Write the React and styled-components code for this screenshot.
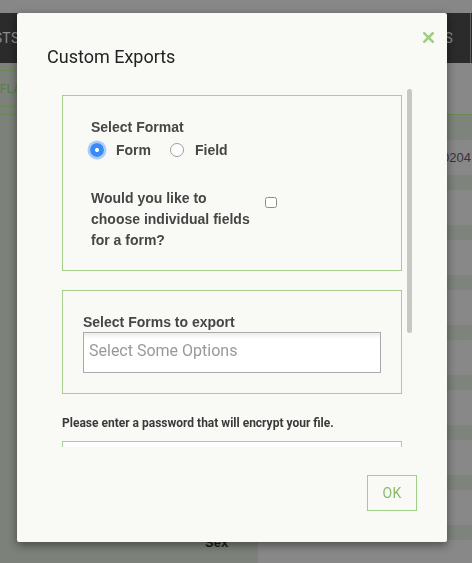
import React from "react";
import styled, { createGlobalStyle } from "styled-components";

const Global = createGlobalStyle`
  html, body { margin: 0; padding: 0; }
  body { font-family: Roboto, "Liberation Sans", Arial, sans-serif; overflow: hidden; }
`;

/* ---------- background page (dimmed) ---------- */
const Page = styled.div`
  width: 472px;
  height: 563px;
  display: flex;
  flex-direction: column;
  overflow: hidden;
  background: #878787;
`;
const TopStrip = styled.div`
  height: 13px;
  flex: none;
  background: #878787;
`;
const NavBar = styled.div`
  height: 50px;
  flex: none;
  background: #2b2b2b;
  display: flex;
  align-items: center;
  justify-content: space-between;
`;
const NavItem = styled.span`
  font-family: Roboto, sans-serif;
  font-size: 14px;
  color: #8c8c8c;
  letter-spacing: 0.3px;
  margin-left: ${(p) => p.$offset || 0}px;
`;
const NavRight = styled.div`
  display: flex;
  align-items: center;
  height: 100%;
`;
const NavDivider = styled.div`
  width: 1px;
  height: 100%;
  background: #5c5c5c;
  margin: 0 1px 0 17px;
`;
const Body = styled.div`
  flex: 1;
  display: flex;
  min-height: 0;
`;
const Sidebar = styled.div`
  width: 258px;
  flex: none;
  background: #7c8179;
  display: flex;
  flex-direction: column;
`;
const SideHeader = styled.div`
  height: 52px;
  box-sizing: border-box;
  border-bottom: 1px solid #6a8a55;
  padding-top: 7px;
`;
const FlagButton = styled.div`
  height: 37px;
  box-sizing: border-box;
  border-top: 1px solid #6a8a55;
  border-bottom: 1px solid #6a8a55;
  display: flex;
  align-items: center;
  font-family: Roboto, sans-serif;
  font-size: 12px;
  color: #5d7d48;
  width: 120px;
`;
const SideList = styled.div`
  flex: 1;
  display: flex;
  flex-direction: column;
  justify-content: flex-end;
  padding: 0 0 13px 205px;
`;
const SideLabel = styled.span`
  font-family: "Liberation Sans", Arial, sans-serif;
  font-weight: 700;
  font-size: 13px;
  color: #1c1c1c;
`;
const Main = styled.div`
  flex: 1;
  background: #888888;
  display: flex;
  flex-direction: column;
`;
const MainHeader = styled.div`
  height: 52px;
  flex: none;
  box-sizing: border-box;
  border-bottom: 1px solid #6a8a55;
`;
const HeadRow = styled.div`
  height: 25px;
  flex: none;
  background: #7e837c;
`;
const Row = styled.div`
  height: 50px;
  flex: none;
  box-sizing: border-box;
  border-bottom: 15px solid #7e837c;
  display: flex;
  align-items: center;
  justify-content: flex-end;
  padding-right: 1px;
  font-family: "Liberation Sans", Arial, sans-serif;
  font-size: 13px;
  color: #353535;
`;

/* ---------- modal ---------- */
const Modal = styled.div`
  position: fixed;
  left: 17px;
  top: 13px;
  width: 430px;
  height: 529px;
  box-sizing: border-box;
  background: #f9faf6;
  border-radius: 2px;
  box-shadow: 0 3px 10px rgba(0, 0, 0, 0.45);
  display: flex;
  flex-direction: column;
`;
const Header = styled.div`
  padding: 33px 30px 0;
`;
const Title = styled.h4`
  margin: 0;
  font-family: Roboto, sans-serif;
  font-weight: 400;
  font-size: 18px;
  line-height: 21px;
  color: #222;
`;
const CloseButton = styled.button`
  position: absolute;
  top: 19px;
  right: 13px;
  width: 11px;
  height: 11px;
  padding: 0;
  border: 0;
  background: none;
  display: flex;
  cursor: pointer;
`;
const ScrollWrap = styled.div`
  position: relative;
  margin: 22px 0 0 45px;
  width: 350px;
  height: 358px;
  flex: none;
`;
const ScrollArea = styled.div`
  width: 340px;
  height: 100%;
  overflow-y: auto;
  scrollbar-width: none;
  &::-webkit-scrollbar { display: none; }
`;
const ScrollThumb = styled.div`
  position: absolute;
  left: 345px;
  top: 0;
  width: 4.5px;
  height: 244px;
  border-radius: 3px;
  background: #c7c8c3;
`;
const Content = styled.div`
  padding-bottom: 133px;
`;
const FieldBox = styled.div`
  margin-top: ${(p) => p.$mt}px;
  border: 1px solid #a6d08c;
  padding: ${(p) => p.$pad};
`;
const Label = styled.div`
  font-family: "Liberation Sans", Arial, sans-serif;
  font-weight: 700;
  font-size: 14px;
  line-height: 18px;
  color: #464646;
`;
const RadioRow = styled.div`
  margin-top: 4px;
  height: 20px;
  display: flex;
  align-items: center;
  margin-left: -1px;
`;
const RadioOption = styled.label`
  display: flex;
  align-items: center;
  margin-right: ${(p) => p.$mr || 0}px;
`;
const Radio = styled.input.attrs({ type: "radio" })`
  appearance: none;
  margin: 0 ${(p) => p.$gap}px 0 0;
  width: 14px;
  height: 14px;
  border-radius: 50%;
  box-sizing: border-box;
  border: 1px solid #9f9f9f;
  background: #fff;
  &:checked {
    border: none;
    background: radial-gradient(circle, #fff 0 1.7px, #3a8bf6 2.3px);
    box-shadow: 0 0 0 2.5px rgba(110, 168, 250, 0.55);
  }
`;
const OptionText = styled.span`
  font-family: "Liberation Sans", Arial, sans-serif;
  font-weight: 700;
  font-size: 14px;
  color: #464646;
`;
const QuestionRow = styled.div`
  margin-top: 28px;
  display: flex;
  align-items: flex-start;
`;
const Question = styled.div`
  width: 166px;
  font-family: "Liberation Sans", Arial, sans-serif;
  font-weight: 700;
  font-size: 14px;
  line-height: 21px;
  color: #464646;
`;
const Checkbox = styled.input.attrs({ type: "checkbox" })`
  appearance: none;
  margin: 9px 0 0 8px;
  width: 12px;
  height: 11px;
  box-sizing: border-box;
  border: 1px solid #8c8c8c;
  border-radius: 2.5px;
  background: #fff;
`;
const ChosenBox = styled.div`
  margin-top: 1px;
  height: 41px;
  box-sizing: border-box;
  border: 1px solid #aaa;
  background: linear-gradient(#eee 1%, #fff 15%);
  padding: 5px 5px 0;
`;
const ChosenInput = styled.input`
  width: 100%;
  height: 25px;
  padding: 0;
  border: 0;
  outline: none;
  background: transparent;
  font-family: Roboto, sans-serif;
  font-size: 16px;
  color: #444;
  &::placeholder { color: #999; }
`;
const NoteLabel = styled.div`
  margin-top: 20px;
  font-family: Roboto, sans-serif;
  font-weight: 700;
  font-size: 12px;
  line-height: 18px;
  color: #3a3a3a;
`;
const PasswordInput = styled.input.attrs({ type: "password" })`
  display: block;
  margin: 9px 0 0;
  width: 340px;
  height: 40px;
  box-sizing: border-box;
  border: 1px solid #a6d08c;
  background: #fff;
  outline: none;
`;
const Footer = styled.div`
  display: flex;
  justify-content: flex-end;
  padding: 28px 30px 0;
`;
const OkButton = styled.button`
  width: 50px;
  height: 36px;
  border: 1px solid #a2cf86;
  background: transparent;
  font-family: Roboto, sans-serif;
  font-size: 14px;
  color: #89ba6b;
  letter-spacing: 0.4px;
  padding: 0;
  cursor: pointer;
`;

const rows = ["10204", "", "", "", "", "", "", ""];

export default function App() {
  return (
    <>
      <Global />
      <Page>
        <TopStrip />
        <NavBar>
          <NavItem $offset={-51}>REQUESTS</NavItem>
          <NavRight>
            <NavItem>REPORTS</NavItem>
            <NavDivider />
          </NavRight>
        </NavBar>
        <Body>
          <Sidebar>
            <SideHeader>
              <FlagButton>FLAGS</FlagButton>
            </SideHeader>
            <SideList>
              <SideLabel>Sex</SideLabel>
            </SideList>
          </Sidebar>
          <Main>
            <MainHeader />
            <HeadRow />
            {rows.map((r, i) => (
              <Row key={i}>{r}</Row>
            ))}
          </Main>
        </Body>
      </Page>

      <Modal role="dialog">
        <Header>
          <Title>Custom Exports</Title>
        </Header>
        <CloseButton aria-label="Close">
          <svg width="11" height="11" viewBox="0 0 11 11">
            <path d="M1.3 1.3 L9.7 9.7 M9.7 1.3 L1.3 9.7" stroke="#9dcf83" strokeWidth="2.6" strokeLinecap="square" />
          </svg>
        </CloseButton>
        <ScrollWrap>
          <ScrollArea>
            <Content>
              <FieldBox $mt={6} $pad="22px 20px 19px 28px">
                <Label>Select Format</Label>
                <RadioRow>
                  <RadioOption $mr={19}>
                    <Radio name="fmt" defaultChecked $gap={12} />
                    <OptionText>Form</OptionText>
                  </RadioOption>
                  <RadioOption>
                    <Radio name="fmt" $gap={11} />
                    <OptionText>Field</OptionText>
                  </RadioOption>
                </RadioRow>
                <QuestionRow>
                  <Question>Would you like to choose individual fields for a form?</Question>
                  <Checkbox />
                </QuestionRow>
              </FieldBox>
              <FieldBox $mt={19} $pad="22px 20px 20px 20px">
                <Label>Select Forms to export</Label>
                <ChosenBox>
                  <ChosenInput placeholder="Select Some Options" />
                </ChosenBox>
              </FieldBox>
              <NoteLabel>Please enter a password that will encrypt your file.</NoteLabel>
              <PasswordInput />
            </Content>
          </ScrollArea>
          <ScrollThumb />
        </ScrollWrap>
        <Footer>
          <OkButton>OK</OkButton>
        </Footer>
      </Modal>
    </>
  );
}
